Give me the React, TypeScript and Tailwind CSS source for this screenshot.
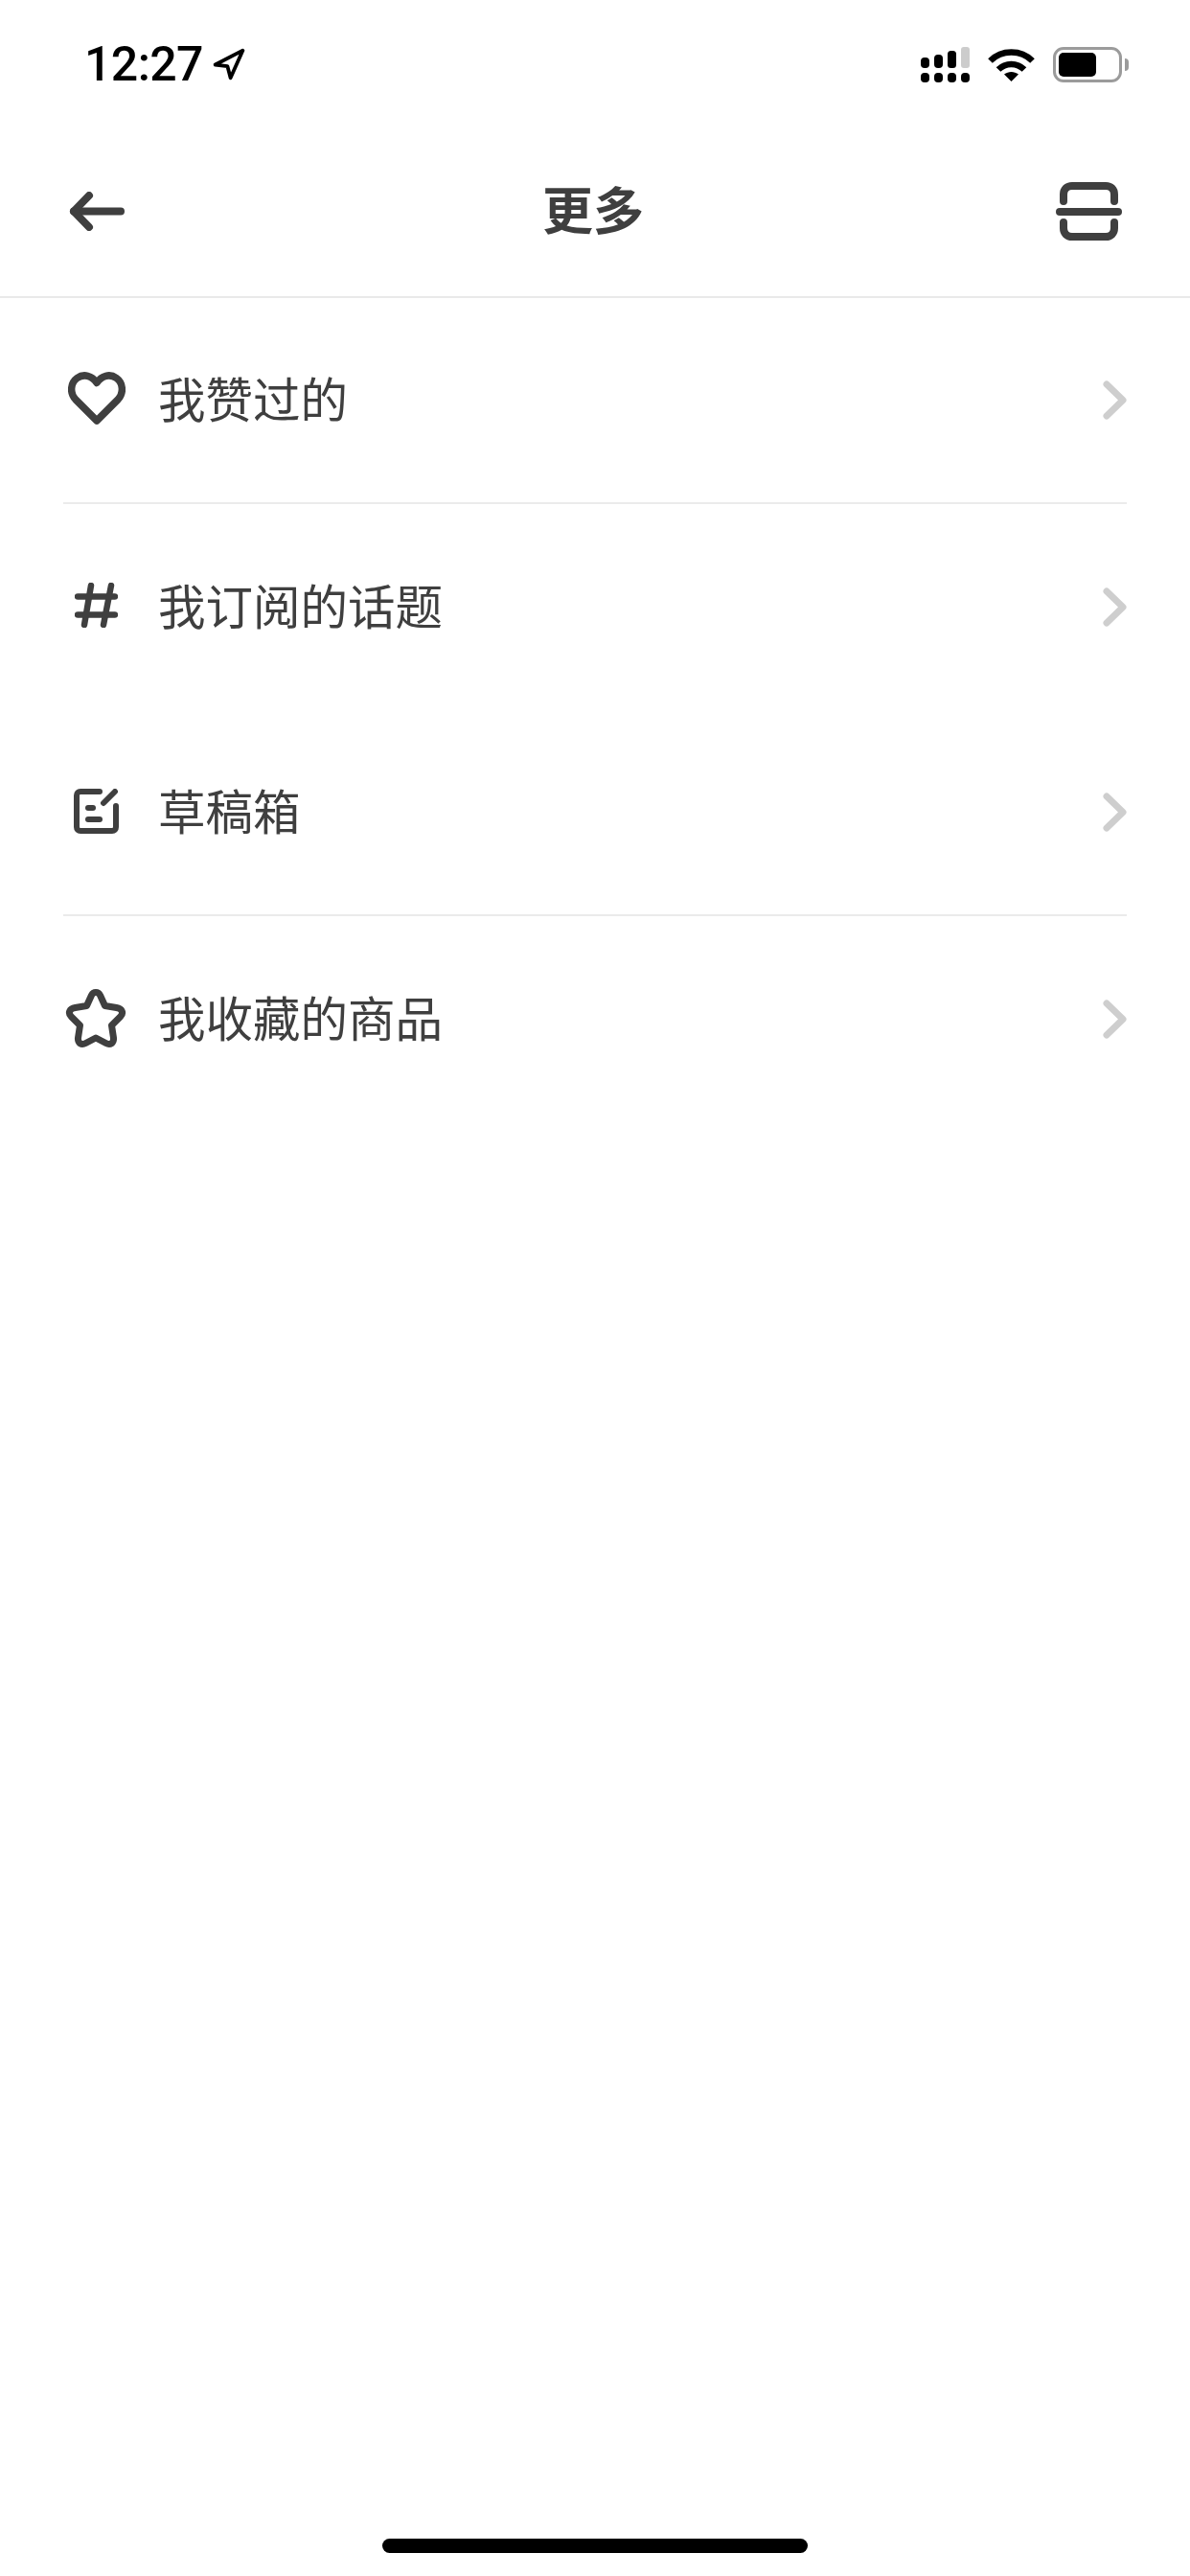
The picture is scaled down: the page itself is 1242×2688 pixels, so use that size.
import React from "react";

const cjk = "font-['Noto_Sans_CJK_SC','Noto_Sans',sans-serif]";

const SignalIcon = () => (
  <svg width="51" height="37" viewBox="0 0 51 37" fill="#000">
    <rect x="0" y="11" width="9" height="11" rx="4" />
    <rect x="14" y="8" width="9" height="14" rx="4" />
    <rect x="28" y="4" width="9" height="18" rx="3.5" />
    <rect x="42" y="0" width="9" height="22" rx="3" fill="#cccccc" />
    <rect x="0" y="27" width="9" height="10" rx="4" />
    <rect x="14" y="27" width="9" height="10" rx="4" />
    <rect x="28" y="27" width="9" height="10" rx="4" />
    <rect x="42" y="27" width="9" height="10" rx="4" />
  </svg>
);

const WifiIcon = () => (
  <svg width="49" height="36" viewBox="0 0 49 36" fill="none">
    <path d="M2.5 14.5C14.5 2.5 34.5 2.5 46.5 14.5" stroke="#000" strokeWidth="6.5" />
    <path d="M11 23.5C18.5 16 30.5 16 38 23.5" stroke="#000" strokeWidth="6.5" />
    <path d="M17 28.5C21.5 25 27.5 25 32 28.5L24.5 36Z" fill="#000" />
  </svg>
);

const Battery = () => (
  <div className="flex items-center">
    <div className="w-[72px] h-[37px] rounded-[11px] border-[3px] border-[#9b9b9b] p-[3px]">
      <div className="w-[39px] h-full rounded-[5px] bg-black" />
    </div>
    <div className="w-[4px] h-[13px] ml-[3px] rounded-r-full bg-[#9b9b9b]" />
  </div>
);

const LocationIcon = () => (
  <svg width="34" height="34" viewBox="0 0 32 32" fill="none">
    <path
      d="M29.5 2.5L2.5 16.5L14.5 18L17.5 29.5Z"
      stroke="#000"
      strokeWidth="3.6"
      strokeLinejoin="round"
    />
  </svg>
);

const BackIcon = () => (
  <svg width="58" height="41" viewBox="0 0 58 41" fill="none" stroke="#3f3f3f" strokeWidth="8" strokeLinecap="round" strokeLinejoin="round">
    <path d="M54 20.5H5" />
    <path d="M21 4L5 20.5L21 37" />
  </svg>
);

const ScanIcon = () => (
  <svg width="69" height="61" viewBox="0 0 69 61" fill="none" stroke="#3f3f3f" strokeLinecap="round">
    <path d="M8 20V13C8 7.5 11.5 4 17 4H52C57.5 4 61 7.5 61 13V20" strokeWidth="8" />
    <path d="M4 31H65" strokeWidth="8" />
    <path d="M8 42V48C8 53.5 11.5 57 17 57H52C57.5 57 61 53.5 61 48V42" strokeWidth="8" />
  </svg>
);

const HeartIcon = () => (
  <svg className="mb-[4px] ml-[2px]" width="60" height="55" viewBox="0 0 60 55" fill="none" stroke="#3f3f3f" strokeWidth="7.5" strokeLinejoin="round">
    <path d="M30 51L8 29C1.5 22 2.5 11.5 9.5 6.5C16.5 1.5 25 4 30 11.5C35 4 43.5 1.5 50.5 6.5C57.5 11.5 58.5 22 52 29Z" />
  </svg>
);

const HashIcon = () => (
  <svg className="mb-[4px]" width="45" height="47" viewBox="0 0 45 47" fill="none" stroke="#3f3f3f" strokeWidth="6.5" strokeLinecap="round">
    <path d="M3 14.5H42" />
    <path d="M3 33.5H42" />
    <path d="M17 3L10 44" />
    <path d="M38 3L30 44" />
  </svg>
);

const DraftIcon = () => (
  <svg className="mb-[2px]" width="47" height="47" viewBox="0 0 47 47" fill="none" stroke="#3f3f3f" strokeWidth="6" strokeLinecap="round">
    <path d="M27 3H7C4.5 3 3 4.5 3 7V40C3 42.5 4.5 44 7 44H40C42.5 44 44 42.5 44 40V18" />
    <path d="M31 15L43 3" />
    <path d="M15 20H20" />
    <path d="M15 32H27" />
  </svg>
);

const StarIcon = () => (
  <svg className="mb-[2px]" width="64" height="62" viewBox="0 0 64 62" fill="none" stroke="#3f3f3f" strokeWidth="7" strokeLinejoin="round">
    <path d="M27.5 6.5C29.5 2.5 34.5 2.5 36.5 6.5L41.5 17.5L53.5 19.5C59.5 20.5 61.5 25 57.5 29L48.5 38L50.5 51C51 56.5 47 59 42.5 56.5L32 51L21.5 56.5C17 59 13 56.5 13.5 51L15.5 38L6.5 29C2.5 25 4.5 20.5 10.5 19.5L22.5 17.5Z" />
  </svg>
);

const ChevronIcon = () => (
  <svg width="25" height="41" viewBox="0 0 25 41" fill="none" stroke="#cecece" strokeWidth="7" strokeLinecap="round" strokeLinejoin="round">
    <path d="M4 4L21 20.5L4 37" />
  </svg>
);

const rows = [
  { label: "我赞过的", icon: <HeartIcon />, divider: true },
  { label: "我订阅的话题", icon: <HashIcon />, divider: false },
  { label: "草稿箱", icon: <DraftIcon />, divider: true },
  { label: "我收藏的商品", icon: <StarIcon />, divider: false },
];

const App = () => {
  return (
    <div className={`w-[1242px] h-[2688px] bg-white flex flex-col text-[#3f3f3f] ${cjk}`}>
      {/* status bar */}
      <div className="h-[134px] flex items-center justify-between pl-[88px] pr-[64px] text-black">
        <div className="flex items-center gap-[10px]">
          <span className="font-['Roboto',sans-serif] font-medium text-[50px] leading-none tracking-[-0.6px]">12:27</span>
          <LocationIcon />
        </div>
        <div className="flex items-center gap-[19px]">
          <SignalIcon />
          <WifiIcon />
          <Battery />
        </div>
      </div>

      {/* nav bar */}
      <div className="h-[177px] shrink-0 flex items-center pl-[72px] pr-[71px] pb-[3px] border-b-2 border-[#e9e9e9]">
        <div className="w-[75px] flex">
          <BackIcon />
        </div>
        <h1 className="flex-1 mb-[6px] text-center text-[53px] leading-none font-bold">更多</h1>
        <div className="w-[80px] flex justify-end">
          <ScanIcon />
        </div>
      </div>

      {/* menu list */}
      <div className="px-[66px]">
        {rows.map((row) => (
          <div
            key={row.label}
            className={`h-[215px] flex items-center ${row.divider ? "border-b-2 border-[#ebebeb]" : ""}`}
          >
            <div className="w-[68px] flex justify-center">{row.icon}</div>
            <span className="ml-[31px] mb-[6px] flex-1 text-[49.5px] leading-none">{row.label}</span>
            <ChevronIcon />
          </div>
        ))}
      </div>

      {/* home indicator */}
      <div className="mt-auto pb-[24px] flex justify-center">
        <div className="w-[444px] h-[15px] rounded-full bg-black" />
      </div>
    </div>
  );
};

export default App;
